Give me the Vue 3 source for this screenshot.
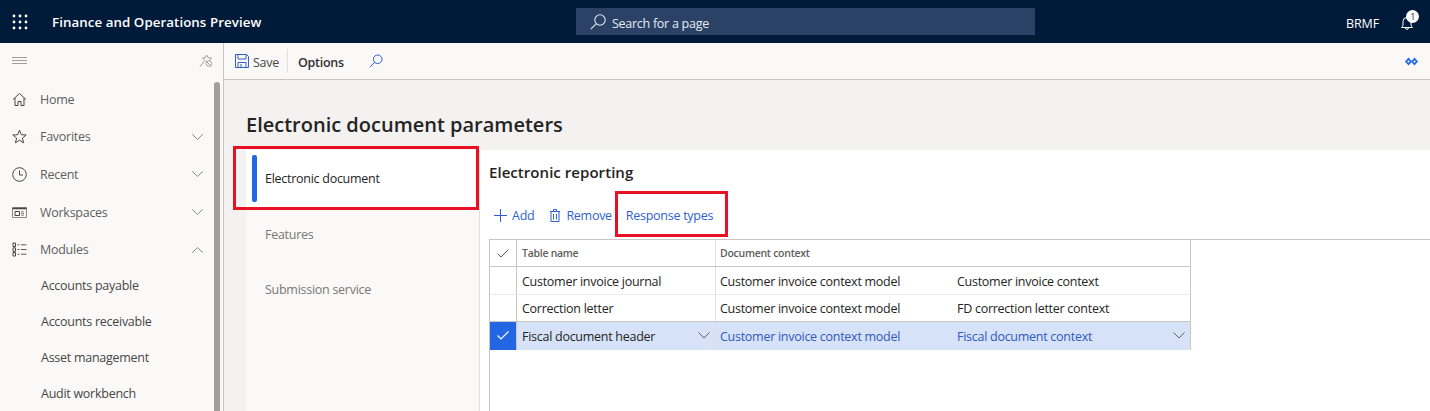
<template>
  <div class="page">
    <header class="topbar">
      <svg class="waffle" width="16" height="16" viewBox="0 0 16 16">
        <g fill="#fff">
          <template v-for="y in [2, 8, 14]" :key="y">
            <circle v-for="x in [2, 8, 14]" :key="x" :cx="x" :cy="y" r="1.4" />
          </template>
        </g>
      </svg>
      <div class="app-name">Finance and Operations Preview</div>
      <div class="search">
        <svg width="18" height="18" viewBox="0 0 18 18" fill="none" stroke="#dfe6f0" stroke-width="1.1">
          <circle cx="11" cy="7" r="5.2" />
          <path d="M7.2 10.8 1.8 16.2" />
        </svg>
        <span class="search-text">Search for a page</span>
      </div>
      <div class="company">BRMF</div>
      <div class="bell">
        <svg width="12" height="14" viewBox="0 0 12 14" fill="none" stroke="#fff" stroke-width="1">
          <path d="M.5 11.500c1-.8 1.500-1.800 1.500-3.500V5.500a4 4 0 0 1 8 0V8c0 1.700.5 2.700 1.500 3.500z" />
          <path d="M4.500 11.800a1.500 1.500 0 0 0 3 0" />
        </svg>
        <span class="badge">1</span>
      </div>
    </header>

    <div class="body">
      <aside class="sidebar">
        <div class="side-top">
          <svg width="15" height="8" viewBox="0 0 15 8" stroke="#a19f9d" stroke-width="1">
            <path d="M0 .5h15M0 3.500h15M0 6.500h15" />
          </svg>
          <svg width="14" height="14" viewBox="0 0 14 14" fill="none" stroke="#a19f9d" stroke-width="1">
            <path d="M7.500 1 9 3.500l3.500.5-2 2.500" />
            <path d="M7.500 1 6.500 3.500 3.500 4l3 3" />
            <path d="M5.500 7 .8 12.800" />
            <circle cx="9.800" cy="9.500" r="2.800" />
            <path d="M7 7l5.500 5.500" />
          </svg>
        </div>
        <nav class="nav">
          <div v-for="item in navItems" :key="item.label" class="nav-item">
            <svg class="nav-icon" width="15" height="15" viewBox="0 0 15 15" fill="none" stroke="#484644" stroke-width="1" v-html="item.icon"></svg>
            <span>{{ item.label }}</span>
            <svg v-if="item.arrow" class="nav-arrow" width="11" height="6" viewBox="0 0 11 6" fill="none" stroke="#8a8886" stroke-width="1">
              <path :d="item.arrow === 'up' ? 'M.3 5.700 5.500.500l5.200 5.200' : 'M.3.300 5.500 5.500 10.700.300'" />
            </svg>
          </div>
          <div v-for="mod in modules" :key="mod" class="sub-item">{{ mod }}</div>
        </nav>
        <div class="side-scroll"></div>
      </aside>

      <main class="main">
        <div class="toolbar">
          <button class="tool save">
            <svg width="14" height="14" viewBox="0 0 14 14" fill="none" stroke="#2f5fd0" stroke-width="1">
              <path d="M.5.500h11l2 2v11H.500z" />
              <path d="M3 .500v4.500h8V.500M3 13.500V8.500h8v5M6 10v3.500" />
            </svg>
            <span class="tool-text">Save</span>
          </button>
          <div class="tool-sep"></div>
          <div class="tool options"><span class="tool-text">Options</span></div>
          <svg class="tool-search" width="14" height="14" viewBox="0 0 14 14" fill="none" stroke="#2f5fd0" stroke-width="1">
            <circle cx="8.700" cy="5.300" r="4.300" />
            <path d="M5.600 8.400.8 13.200" />
          </svg>
          <svg class="tool-end" width="13" height="9" viewBox="0 0 13 9" fill="#2266e3">
            <path d="M3.500.500 7 4.500 3.500 8.500 0 4.500zM9.500.500 13 4.500 9.500 8.500 6 4.500z" />
            <circle cx="3.500" cy="4.500" r="1.100" fill="#faf9f8" />
            <circle cx="9.500" cy="4.500" r="1.100" fill="#faf9f8" />
          </svg>
        </div>

        <div class="content">
          <h1>Electronic document parameters</h1>
          <div class="tabs">
            <div class="tab-list">
              <div class="tab active"><i class="tab-bar"></i>Electronic document</div>
              <div class="tab">Features</div>
              <div class="tab">Submission service</div>
              <div class="red-box box-tab"></div>
            </div>
            <section class="panel">
              <h2>Electronic reporting</h2>
              <div class="actions">
                <span class="action">
                  <svg width="13" height="13" viewBox="0 0 13 13" stroke="#2f5fd0" stroke-width="1"><path d="M6.500 0v13M0 6.500h13" /></svg>
                  Add
                </span>
                <span class="action remove">
                  <svg width="10" height="13" viewBox="0 0 10 13" fill="none" stroke="#2f5fd0" stroke-width="1">
                    <path d="M0 2.500h10M3.500 2.500V.500h3v2M1 2.500v10h8v-10M3.500 5v5.500M6.500 5v5.500" />
                  </svg>
                  Remove
                </span>
                <span class="action">Response types</span>
                <div class="red-box box-response"></div>
              </div>

              <div class="grid">
                <div class="grid-row head">
                  <div class="c-check">
                    <svg width="12" height="9" viewBox="0 0 12 9" fill="none" stroke="#605e5c" stroke-width="1"><path d="M.5 4.500 4 8 11.500.500" /></svg>
                  </div>
                  <div class="c-name">Table name</div>
                  <div class="c-doc">Document context</div>
                </div>
                <div v-for="row in rows" :key="row.name" class="grid-row" :class="{ selected: row.selected }">
                  <div class="c-check">
                    <svg v-if="row.selected" width="12" height="9" viewBox="0 0 12 9" fill="none" stroke="#fff" stroke-width="1.200"><path d="M.5 4.500 4 8 11.500.500" /></svg>
                  </div>
                  <div class="c-name">
                    {{ row.name }}
                    <svg v-if="row.selected" class="cell-arrow" width="12" height="7" viewBox="0 0 12 7" fill="none" stroke="#605e5c" stroke-width="1"><path d="M.5.500 6 6 11.500.500" /></svg>
                  </div>
                  <div class="c-doc">
                    <span class="model">{{ row.model }}</span>
                    <span>{{ row.context }}</span>
                    <svg v-if="row.selected" class="cell-arrow" width="12" height="7" viewBox="0 0 12 7" fill="none" stroke="#605e5c" stroke-width="1"><path d="M.5.500 6 6 11.500.500" /></svg>
                  </div>
                </div>
              </div>
            </section>
          </div>
        </div>
      </main>
    </div>
  </div>
</template>

<script setup>
const navItems = [
  { label: "Home", icon: '<path d="M1 7.500 7.500 1.500 14 7.500M3 6v7.500h3V9.500h3v4h3V6"/>' },
  { label: "Favorites", arrow: "down", icon: '<path d="M7.500 1.200 9.300 5.700 14.200 6 10.400 9.100 11.600 13.800 7.500 11.200 3.400 13.800 4.600 9.100.8 6 5.700 5.700z"/>' },
  { label: "Recent", arrow: "down", icon: '<circle cx="7.500" cy="7.500" r="6.800"/><path d="M7.500 3.500v4.500h3.500"/>' },
  { label: "Workspaces", arrow: "down", icon: '<path d="M.5 2.500h14v10H.500z" stroke="#8a8886"/><path d="M.5 3.500h14" stroke-width="1.500"/><path d="M3 6.500h4.500v4H3z"/><path d="M9 6.800h3M9 8.500h3M9 10.200h3" stroke="#8a8886"/>' },
  { label: "Modules", arrow: "up", icon: '<path d="M1 1h2.500v3.500H1zM1 5.800h2.500v3.500H1zM1 10.500h2.500V14H1z"/><path d="M5.500 2.800h2M9 2.800h5.500M5.500 7.500h2M9 7.500h5.500M5.500 12.200h2M9 12.200h5.500" stroke="#605e5c"/>' },
];

const modules = ["Accounts payable", "Accounts receivable", "Asset management", "Audit workbench"];

const rows = [
  { name: "Customer invoice journal", model: "Customer invoice context model", context: "Customer invoice context" },
  { name: "Correction letter", model: "Customer invoice context model", context: "FD correction letter context" },
  { name: "Fiscal document header", model: "Customer invoice context model", context: "Fiscal document context", selected: true },
];
</script>

<style>
html,
body {
  margin: 0;
  overflow: hidden;
}
</style>

<style scoped>
.page {
  width: 1430px;
  height: 411px;
  overflow: hidden;
  font-family: "Open Sans", "Noto Sans", sans-serif;
  font-size: 12.5px;
  letter-spacing: -0.27px;
  color: #323130;
  background: #faf9f8;
}

.topbar {
  height: 43px;
  display: flex;
  align-items: center;
  background: #001a3a;
  color: #fff;
}
.waffle {
  margin-left: 12px;
}
.app-name {
  margin-left: 24px;
  width: 524px;
  font-size: 13.3px;
  font-weight: 600;
  letter-spacing: 0.07px;
}
.search {
  width: 459px;
  height: 27px;
  display: flex;
  align-items: center;
  gap: 5px;
  padding-left: 13px;
  box-sizing: border-box;
  background: #2b4266;
  color: #e6ebf2;
}
.search-text {
  padding-top: 4px;
}
.company {
  margin-left: 311px;
  padding-top: 4px;
  letter-spacing: -0.1px;
}
.bell {
  position: relative;
  margin-left: 22px;
  height: 14px;
  margin-top: 3px;
}
.badge {
  position: absolute;
  top: -6px;
  left: 5px;
  width: 13px;
  height: 13px;
  border-radius: 50%;
  background: #fff;
  color: #001a3a;
  font-size: 9px;
  line-height: 13px;
  text-align: center;
}

.body {
  display: flex;
  height: 368px;
}
.sidebar {
  position: relative;
  width: 224px;
  flex: none;
  box-sizing: border-box;
  border-right: 1px solid #c8c6c4;
  background: #faf9f8;
}
.side-top {
  height: 36px;
  display: flex;
  align-items: center;
  justify-content: space-between;
  padding: 0 10px 0 12px;
}
.nav {
  padding-top: 1.45px;
}
.nav-item {
  height: 37.6px;
  display: flex;
  align-items: center;
  padding: 0 20px 0 12px;
  color: #605e5c;
}
.nav-icon {
  margin-right: 13px;
}
.nav-arrow {
  margin-left: auto;
}
.sub-item {
  height: 36px;
  line-height: 36px;
  padding-left: 41px;
  color: #484644;
}
.side-scroll {
  position: absolute;
  top: 39px;
  bottom: 0;
  left: 214px;
  width: 6px;
  border-radius: 3px 3px 0 0;
  background: #a19f9d;
}

.main {
  flex: 1;
  min-width: 0;
}
.toolbar {
  height: 37px;
  display: flex;
  align-items: center;
  box-sizing: border-box;
  border-bottom: 1px solid #c8c6c4;
  background: #faf9f8;
}
.tool {
  display: flex;
  align-items: center;
}
.tool-text {
  padding-top: 3px;
}
.save {
  gap: 4px;
  padding: 0 0 0 11px;
  border: 0;
  background: none;
  font: inherit;
  letter-spacing: inherit;
  color: #484644;
}
.tool-sep {
  width: 1px;
  height: 24px;
  margin: 0 10px 0 8px;
  background: #e1dfdd;
}
.options {
  font-weight: 600;
  color: #323130;
}
.tool-search {
  margin-left: 25px;
}
.tool-end {
  margin-left: auto;
  margin-right: 12px;
}

.content {
  height: 331px;
  background: #f3f2f1;
}
h1 {
  margin: 0;
  padding: 31px 0 0 22px;
  height: 70px;
  box-sizing: border-box;
  font-size: 20px;
  line-height: 28px;
  font-weight: 600;
  letter-spacing: 0;
  color: #252423;
}
.tabs {
  display: flex;
  height: 262px;
  margin-left: 22px;
}
.tab-list {
  position: relative;
  width: 233px;
  flex: none;
  background: #faf9f8;
  border-right: 1px solid #e1dfdd;
}
.tab {
  height: 55px;
  display: flex;
  align-items: center;
  padding-left: 19px;
  color: #797775;
}
.tab.active {
  position: relative;
  height: 57px;
  background: #fff;
  color: #252423;
}
.tab-bar {
  position: absolute;
  left: 6px;
  top: 5px;
  bottom: 5px;
  width: 5px;
  border-radius: 2px;
  background: #2266e3;
}
.panel {
  flex: 1;
  min-width: 0;
  padding-left: 9px;
  background: #fff;
}
h2 {
  margin: 0;
  padding-top: 11px;
  height: 47px;
  box-sizing: border-box;
  font-size: 15px;
  line-height: 22px;
  font-weight: 600;
  letter-spacing: 0.05px;
  color: #252423;
}
.actions {
  position: relative;
  height: 42px;
  display: flex;
  align-items: center;
  box-sizing: border-box;
  padding: 0 0 6px 5px;
  color: #2f5fd0;
}
.action {
  display: flex;
  align-items: center;
  gap: 5px;
  margin-right: 16px;
}
.remove {
  gap: 6px;
  margin-right: 14px;
}
.red-box {
  position: absolute;
  border: 3px solid #e81123;
  box-sizing: border-box;
  pointer-events: none;
}
.box-tab {
  left: -13px;
  top: -4px;
  width: 246px;
  height: 64px;
}
.box-response {
  left: 126px;
  top: -6px;
  width: 113px;
  height: 46px;
}

.grid {
  height: 172px;
  box-sizing: border-box;
  border-left: 1px solid #c8c6c4;
  border-top: 1px solid #c8c6c4;
}
.grid-row {
  width: 701px;
  height: 27.5px;
  display: flex;
  box-sizing: border-box;
  border-bottom: 1px solid #edebe9;
  border-right: 1px solid #c8c6c4;
  color: #252423;
}
.grid-row.head {
  height: 27px;
  border-bottom-color: #c8c6c4;
  font-size: 10.5px;
  font-weight: 600;
  color: #605e5c;
}
.grid-row:nth-child(3) {
  border-bottom-color: #c8c6c4;
}
.grid-row:not(.head) .c-name,
.grid-row:not(.head) .c-doc {
  padding-top: 2px;
}
.c-check {
  width: 27px;
  flex: none;
  display: flex;
  align-items: center;
  justify-content: center;
  box-sizing: border-box;
  border-right: 1px solid #c8c6c4;
}
.c-name {
  position: relative;
  width: 199px;
  flex: none;
  display: flex;
  align-items: center;
  box-sizing: border-box;
  padding-left: 5px;
  border-right: 1px solid #e1dfdd;
}
.c-doc {
  position: relative;
  flex: 1;
  display: flex;
  align-items: center;
  padding-left: 4px;
}
.model {
  width: 237px;
}
.cell-arrow {
  position: absolute;
  right: 5px;
  top: 10px;
}
.selected {
  border-bottom: 0;
  background: #d5e2f8;
}
.selected .c-check {
  background: #2266e3;
}
.selected .c-doc {
  color: #3358bd;
}
</style>
